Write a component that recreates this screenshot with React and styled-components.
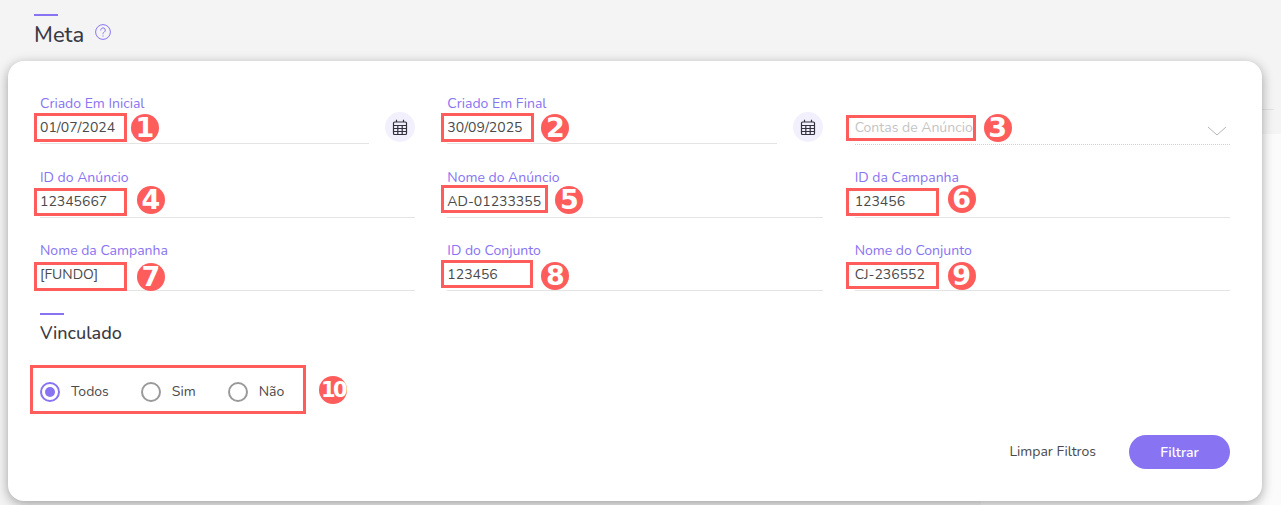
import React from 'react'
import styled, { createGlobalStyle } from 'styled-components'

const GlobalStyle = createGlobalStyle`
  html, body { margin: 0; padding: 0; height: 100%; overflow: hidden; background: #f4f4f4; }
  body { font-family: "Nunito", "Noto Sans", Lato, sans-serif; color: #444; }
`

const purple = '#8873f2'

const CalendarIcon = () => (
  <svg width="16" height="17" viewBox="0 0 16 17" fill="none" stroke="#33333d" strokeWidth="1.2">
    <rect x="1.5" y="3" width="13" height="12.5" rx="1" />
    <path d="M1.5 6.5h13M1.5 9.5h13M1.5 12.5h13M5.8 6.5v9M10.2 6.5v9M4.5 .8v2.2M11.5 .8v2.2" />
  </svg>
)

const HelpIcon = () => (
  <svg width="16" height="16" viewBox="0 0 16 16" fill="none" stroke={purple} strokeWidth="1">
    <circle cx="8" cy="8" r="7.4" />
    <path d="M5.7 6.1a2.3 2.3 0 1 1 3.5 2c-.8.4-1.2.8-1.2 1.7" strokeLinecap="round" />
    <circle cx="8" cy="11.9" r=".6" fill={purple} stroke="none" />
  </svg>
)

const Chevron = () => (
  <svg width="20" height="10" viewBox="0 0 20 10" fill="none" stroke="#b5b5b5" strokeWidth="1">
    <path d="M1 1l9 8 9-8" />
  </svg>
)

// red marks drawn over the fields, offsets are from the value text
const fields = [
  { label: 'ID do Anúncio', value: '12345667', num: '4', box: [-6, -3.5, 93, 28], badge: [97, -5.5] },
  { label: 'Nome do Anúncio', value: 'AD-01233355', num: '5', box: [-6, -7, 107, 28.5], badge: [108, -5.5] },
  { label: 'ID da Campanha', value: '123456', num: '6', box: [-9, -4, 93, 28], badge: [93, -6.5] },
  { label: 'Nome da Campanha', value: '[FUNDO]', num: '7', box: [-6, -3, 93, 28.5], badge: [97, -2] },
  { label: 'ID do Conjunto', value: '123456', num: '8', box: [-6, -5, 92, 28], badge: [94, -3] },
  { label: 'Nome do Conjunto', value: 'CJ-236552', num: '9', box: [-9, -3, 93, 27], badge: [93, -3] },
]

const Marks = ({ box, badge, num }) => (
  <>
    <RedBox $x={box[0]} $y={box[1]} $w={box[2]} $h={box[3]} />
    <Badge $x={badge[0]} $y={badge[1]}>{num}</Badge>
  </>
)

const TextField = ({ label, value, num, box, badge }) => (
  <Field>
    <Label>{label}</Label>
    <Value>
      {value}
      <Marks box={box} badge={badge} num={num} />
    </Value>
  </Field>
)

const DateField = (props) => (
  <DateRow>
    <TextField {...props} />
    <IconCircle>
      <CalendarIcon />
    </IconCircle>
  </DateRow>
)

export default function App() {
  return (
    <>
      <GlobalStyle />
      <Backdrop>
        <BackdropLine />
      </Backdrop>
      <Wrapper>
        <Header>
          <AccentBar />
          <TitleRow>
            <Title>Meta</Title>
            <HelpIcon />
          </TitleRow>
        </Header>
        <Card>
          <FieldGrid>
            <DateField label="Criado Em Inicial" value="01/07/2024" num="1" box={[-6, -5, 93, 29]} badge={[91, -4]} />
            <DateField label="Criado Em Final" value="30/09/2025" num="2" box={[-6, -5, 93, 29]} badge={[94, -4]} />
            <SelectField>
              <SelectText>Contas de Anúncio</SelectText>
              <Chevron />
              <Marks box={[-9, 20, 130, 25.5]} badge={[129, 19]} num="3" />
            </SelectField>
            {fields.map((f) => (
              <TextField key={f.num} {...f} />
            ))}
          </FieldGrid>
          <Section>
            <SmallBar />
            <SectionTitle>Vinculado</SectionTitle>
            <RadioRow>
              <RadioOption>
                <Radio $checked />
                Todos
              </RadioOption>
              <RadioOption>
                <Radio />
                Sim
              </RadioOption>
              <RadioOption>
                <Radio />
                Não
              </RadioOption>
              <RedBox $x={-10.5} $y={-17} $w={276.5} $h={49} />
              <Badge $x={279} $y={-6} $small>10</Badge>
            </RadioRow>
          </Section>
          <Footer>
            <ClearButton>Limpar Filtros</ClearButton>
            <FilterButton>Filtrar</FilterButton>
          </Footer>
        </Card>
      </Wrapper>
    </>
  )
}

const Backdrop = styled.div`
  position: absolute;
  top: 134px;
  right: 0;
  bottom: 0;
  width: 300px;
  border-radius: 8px 0 0 0;
  background: #fbfbfb;
`

const BackdropLine = styled.div`
  position: absolute;
  top: -25px;
  right: 7px;
  width: 100px;
  height: 1px;
  background: #e4e4e4;
`

const Wrapper = styled.div`
  position: relative;
  display: flex;
  flex-direction: column;
  height: 505px;
  padding: 14px 19px 4px 8px;
  box-sizing: border-box;
`

const Header = styled.div`
  padding-left: 26px;
  height: 47px;
`

const AccentBar = styled.div`
  width: 24px;
  height: 2px;
  background: ${purple};
`

const TitleRow = styled.div`
  display: flex;
  align-items: flex-start;
  gap: 11px;
  margin-top: 5px;
  svg { margin-top: 3px; }
`

const Title = styled.h1`
  margin: 0;
  font-size: 22px;
  line-height: 28px;
  font-weight: 500;
  color: #3a3a44;
`

const Card = styled.div`
  flex: 1;
  display: flex;
  flex-direction: column;
  background: #fff;
  border-radius: 16px;
  padding: 34px 32px 32px;
  box-shadow: 0 3px 12px rgba(0, 0, 0, 0.35);
`

const FieldGrid = styled.div`
  display: grid;
  grid-template-columns: repeat(3, 1fr);
  grid-auto-rows: 49px;
  column-gap: 32px;
  row-gap: 24.5px;
`

const DateRow = styled.div`
  display: flex;
  align-items: flex-end;
  gap: 16px;
`

const Field = styled.div`
  flex: 1;
  height: 48px;
  border-bottom: 1px solid #e4e4e4;
`

const Label = styled.div`
  font-size: 14px;
  line-height: 18px;
  color: ${purple};
`

const Value = styled.div`
  position: relative;
  font-size: 14px;
  line-height: 20px;
  margin-top: 5px;
  color: #4a4a4a;
  white-space: nowrap;
`

const RedBox = styled.span`
  position: absolute;
  left: ${(p) => p.$x}px;
  top: ${(p) => p.$y}px;
  width: ${(p) => p.$w}px;
  height: ${(p) => p.$h}px;
  box-sizing: border-box;
  border: 3px solid #ff5c5c;
  pointer-events: none;
`

const Badge = styled.span`
  position: absolute;
  left: ${(p) => p.$x}px;
  top: ${(p) => p.$y}px;
  width: 28px;
  height: 28px;
  border-radius: 50%;
  background: #ff5c5c;
  color: #fff;
  font-family: "DejaVu Sans", sans-serif;
  font-size: ${(p) => (p.$small ? 21 : 27)}px;
  letter-spacing: ${(p) => (p.$small ? -2.5 : 0)}px;
  font-weight: 700;
  line-height: 28px;
  text-align: center;
`

const IconCircle = styled.div`
  width: 30px;
  height: 30px;
  margin-bottom: 2px;
  border-radius: 50%;
  background: #f2f0fd;
  display: flex;
  align-items: center;
  justify-content: center;
  flex-shrink: 0;
`

const SelectField = styled.div`
  position: relative;
  height: 50px;
  display: flex;
  align-items: flex-start;
  justify-content: space-between;
  padding-top: 23px;
  box-sizing: border-box;
  border-bottom: 1px dotted #d0d0d0;
  svg { margin: 8px 3px 0 0; }
`

const SelectText = styled.div`
  font-size: 14px;
  line-height: 20px;
  color: #c4c4c4;
`

const Section = styled.section`
  margin-top: 22px;
`

const SmallBar = styled.div`
  width: 24px;
  height: 2px;
  background: ${purple};
`

const SectionTitle = styled.h2`
  margin: 6px 0 0;
  font-size: 18px;
  line-height: 24px;
  font-weight: 500;
  color: #3a3a44;
`

const RadioRow = styled.div`
  position: relative;
  display: flex;
  gap: 32px;
  margin-top: 37px;
`

const RadioOption = styled.label`
  display: flex;
  align-items: center;
  gap: 11px;
  font-size: 14px;
  line-height: 20px;
  color: #4a4a4a;
`

const Radio = styled.span`
  width: 20px;
  height: 20px;
  box-sizing: border-box;
  border-radius: 50%;
  border: 2px solid ${(p) => (p.$checked ? purple : '#9a9a9a')};
  display: flex;
  align-items: center;
  justify-content: center;
  &::after {
    content: '';
    display: ${(p) => (p.$checked ? 'block' : 'none')};
    width: 10px;
    height: 10px;
    border-radius: 50%;
    background: ${purple};
  }
`

const Footer = styled.div`
  margin-top: auto;
  display: flex;
  justify-content: flex-end;
  align-items: center;
  gap: 33px;
`

const ClearButton = styled.button`
  all: unset;
  font-size: 14px;
  padding-bottom: 2px;
  color: #4a4a4a;
`

const FilterButton = styled.button`
  all: unset;
  width: 101px;
  height: 34px;
  line-height: 33px;
  border-radius: 17px;
  background: ${purple};
  color: #fff;
  font-size: 14px;
  font-weight: 600;
  text-align: center;
`
